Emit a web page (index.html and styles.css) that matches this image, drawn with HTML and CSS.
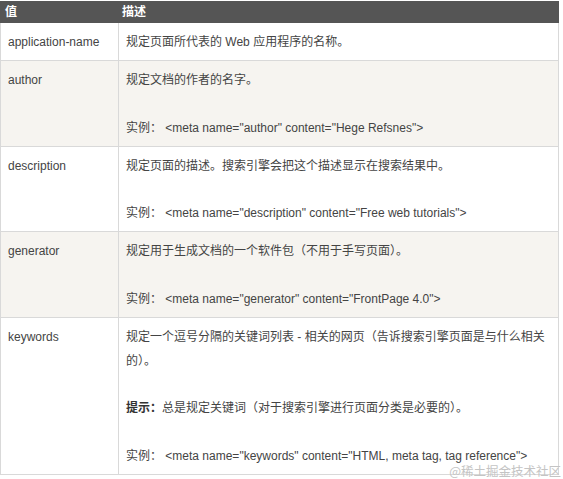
FILE: index.html
```html
<!DOCTYPE html>
<html lang="zh-CN">
<head>
<meta charset="utf-8">
<title>meta name</title>
<link rel="stylesheet" href="styles.css">
</head>
<body>
<div class="page">
<table class="ref">
  <colgroup><col class="c1"><col class="c2"></colgroup>
  <thead>
    <tr><th class="h1">值</th><th class="h2">描述</th></tr>
  </thead>
  <tbody>
    <tr>
      <td>application-name</td>
      <td><p>规定页面所代表的 Web 应用程序的名称。</p></td>
    </tr>
    <tr class="alt">
      <td>author</td>
      <td><p>规定文档的作者的名字。</p><p class="gap">实例： &lt;meta name="author" content="Hege Refsnes"&gt;</p></td>
    </tr>
    <tr>
      <td>description</td>
      <td><p>规定页面的描述。搜索引擎会把这个描述显示在搜索结果中。</p><p class="gap">实例： &lt;meta name="description" content="Free web tutorials"&gt;</p></td>
    </tr>
    <tr class="alt">
      <td>generator</td>
      <td><p>规定用于生成文档的一个软件包（不用于手写页面）。</p><p class="gap">实例： &lt;meta name="generator" content="FrontPage 4.0"&gt;</p></td>
    </tr>
    <tr>
      <td>keywords</td>
      <td><p>规定一个逗号分隔的关键词列表 - 相关的网页（告诉搜索引擎页面是与什么相关的）。</p><p class="gap"><b>提示：</b>总是规定关键词（对于搜索引擎进行页面分类是必要的）。</p><p class="gap last">实例： &lt;meta name="keywords" content="HTML, meta tag, tag reference"&gt;</p></td>
    </tr>
  </tbody>
</table>
<div class="mark">@稀土掘金技术社区</div>
</div>
</body>
</html>
```
FILE: styles.css
```css
html, body {
  margin: 0;
  padding: 0;
  background: #fff;
}
body {
  padding-top: 1px;
  font-family: "Liberation Sans", "Noto Sans CJK SC", sans-serif;
  font-size: 12px;
  color: #444;
}
.page {
  position: relative;
  width: 563px;
  height: 477px;
}
.ref {
  border-collapse: collapse;
  table-layout: fixed;
  width: 559px;
}
.c1 { width: 118px; }
.ref th {
  background: #555;
  color: #fff;
  font-weight: bold;
  text-align: left;
  height: 20px;
  line-height: 20px;
  padding: 0 4px;
  border: 1px solid #555;
}
.ref th.h2 { padding-left: 3px; }
.ref td {
  vertical-align: top;
  border: 1px solid #d9d9d9;
  padding: 7px 6px 6px 7px;
  line-height: 24px;
}
.ref td p { margin: 0; }
.ref td p.gap { margin-top: 23.5px; }
.ref td p.last {
  line-height: 14px;
  margin-top: 28.5px;
  padding-bottom: 5px;
}
.ref tr.alt td { background: #f6f4f0; }
.ref b { font-weight: bold; color: #333; }
.mark {
  position: absolute;
  right: 2px;
  bottom: 1px;
  font-family: "Noto Sans CJK SC", sans-serif;
  font-size: 12.5px;
  line-height: 13px;
  color: #c4c4c4;
}
```
